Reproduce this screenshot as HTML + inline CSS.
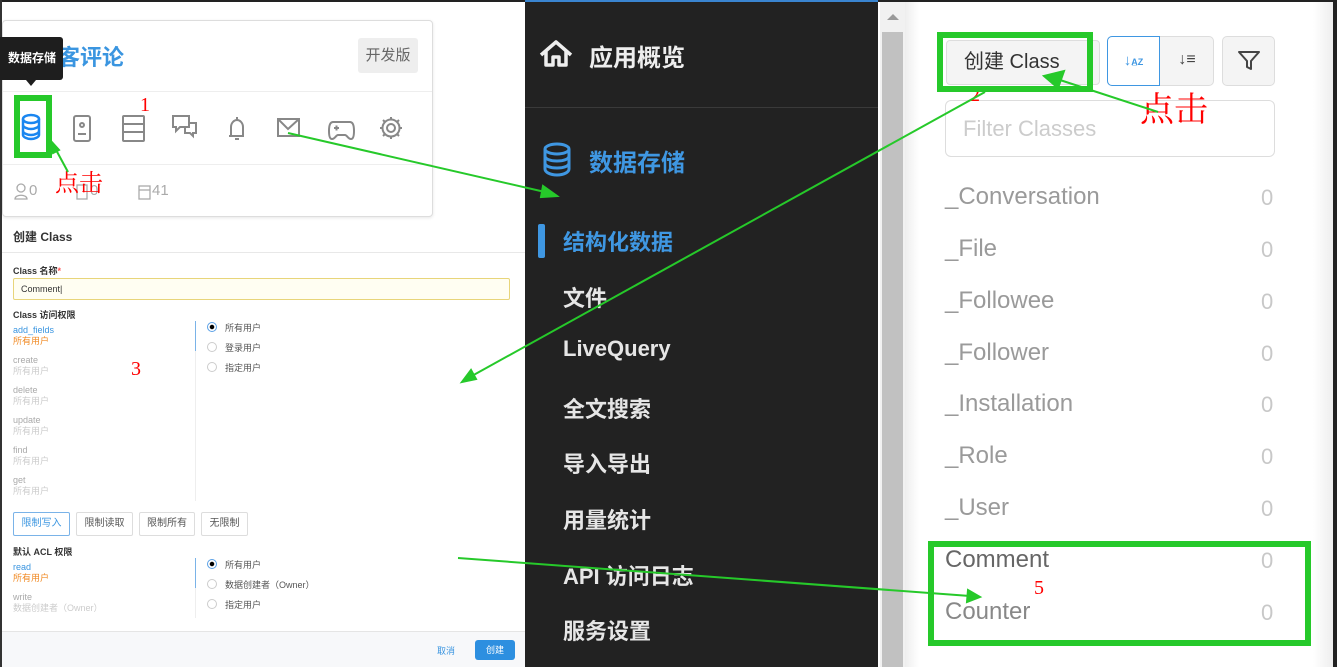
<!DOCTYPE html>
<html><head><meta charset="utf-8"><style>
*{margin:0;padding:0;box-sizing:border-box}
body{width:1337px;height:667px;position:relative;overflow:hidden;background:#fff;font-family:"Liberation Sans","Noto Sans CJK SC",sans-serif}
.a{position:absolute}
.side{color:#e6e6e6;font-size:22px;font-weight:bold;left:563px}
.cls{left:945px;font-size:24px;color:#9a9a9a}
.cnt{left:1261px;font-size:22px;color:#c8c8c8}
.perm{left:13px;font-size:9px;line-height:11px;color:#aaa}
.perm b{font-weight:normal;display:block;color:#ccc}
.rad{width:10px;height:10px;border:1px solid #ccc;border-radius:50%;background:#fff}
.rl{font-size:9px;color:#555}
.btn{height:24px;border:1px solid #ddd;border-radius:2px;font-size:10px;color:#555;text-align:center;line-height:22px}
</style></head><body>
<div class="a" style="left:0;top:0;width:1337px;height:2px;background:#222"></div>
<div class="a" style="left:0;top:0;width:2px;height:667px;background:#333"></div>

<div class="a" style="left:2px;top:20px;width:431px;height:197px;border:1px solid #ddd;border-radius:4px;box-shadow:0 1px 3px rgba(0,0,0,.1);background:#fff"></div>
<div class="a" style="left:3px;top:91px;width:429px;height:1px;background:#eee"></div>
<div class="a" style="left:3px;top:164px;width:429px;height:1px;background:#eee"></div>
<div class="a" style="left:36px;top:40px;font-size:22px;font-weight:bold;color:#3a95e0">博客评论</div>
<div class="a" style="left:358px;top:38px;width:60px;height:35px;background:#eee;border-radius:3px;font-size:15px;color:#666;text-align:center;line-height:35px">开发版</div>
<div class="a" style="left:0;top:37px;width:63px;height:43px;background:#1e1e1e;border-radius:0 3px 3px 0;color:#fff;font-size:12px;font-weight:bold;line-height:43px;padding-left:8px">数据存储</div>
<div class="a" style="left:26px;top:80px;width:0;height:0;border-left:5px solid transparent;border-right:5px solid transparent;border-top:6px solid #1e1e1e"></div>
<svg class="a" style="left:0;top:100px" width="430" height="60" fill="none" stroke="#888" stroke-width="2">
<g stroke="#1a86f0" stroke-width="2.5"><ellipse cx="31" cy="19" rx="8" ry="4"/><path d="M23 19v16c0 2 4 4 8 4s8-2 8-4V19M23 25c0 2 4 4 8 4s8-2 8-4M23 31c0 2 4 4 8 4s8-2 8-4"/></g>
<rect x="74" y="16" width="16" height="25" rx="2"/><circle cx="82" cy="25" r="2"/><path d="M78 34h8"/>
<rect x="123" y="16" width="21" height="25" rx="1"/><path d="M123 24h21M123 32h21"/>
<path d="M173 16h16v11h-9l-4 4v-4h-3zM185 27v6h5l3 3v-3h3v-10h-7"/>
<path d="M229 36h15M231 36v-9c0-4 3-7 6-7s6 3 6 7v9M237 17v3M235 39h4"/>
<rect x="278" y="19" width="21" height="17"/><path d="M278 19l10 10 11-10"/>
<path d="M333 22h17c3 0 4 4 4 9s-1 8-3 8c-3 0-4-4-6-4h-7c-2 0-3 4-6 4-2 0-3-3-3-8s1-9 4-9zM334 28h5M336.5 25.5v5"/>
<circle cx="391" cy="28" r="4"/><path d="M391 17v3M391 36v3M380 28h3M399 28h3M383 20l2 2M397 34l2 2M383 36l2-2M397 22l2-2"/><circle cx="391" cy="28" r="8.5"/>
</svg>
<svg class="a" style="left:14px;top:182px" width="160" height="20" fill="none" stroke="#aaa" stroke-width="1.3"><circle cx="7" cy="6" r="4"/><path d="M1 17c0-5 12-5 12 0z"/><rect x="63" y="3" width="10" height="14"/><rect x="125" y="4" width="11" height="13"/><path d="M125 8h11"/></svg>
<div class="a" style="left:29px;top:182px;font-size:15px;color:#aaa">0</div>
<div class="a" style="left:90px;top:182px;font-size:15px;color:#aaa">0</div>
<div class="a" style="left:152px;top:182px;font-size:15px;color:#aaa">41</div>
<div class="a" style="left:55px;top:163px;font-size:24px;color:#f00;font-family:'Noto Serif CJK SC',serif">点击</div>
<div class="a" style="left:140px;top:94px;font-size:20px;color:#f00;font-family:'Liberation Serif',serif">1</div>

<div class="a" style="left:13px;top:228px;font-size:12px;font-weight:bold;color:#333">创建 Class</div>
<div class="a" style="left:2px;top:252px;width:523px;height:1px;background:#e8e8e8"></div>
<div class="a" style="left:13px;top:264px;font-size:9px;color:#333;font-weight:bold">Class 名称<span style="color:#f55">*</span></div>
<div class="a" style="left:13px;top:278px;width:497px;height:22px;border:1px solid #e8d57a;background:#fffef2;border-radius:2px;font-size:9px;line-height:20px;padding-left:7px;color:#333">Comment|</div>
<div class="a" style="left:13px;top:308px;font-size:9px;color:#333;font-weight:bold">Class 访问权限</div>
<div class="a perm" style="top:325px;color:#3a95e0">add_fields<b style="color:#f08a24">所有用户</b></div>
<div class="a perm" style="top:355px">create<b>所有用户</b></div>
<div class="a perm" style="top:385px">delete<b>所有用户</b></div>
<div class="a perm" style="top:415px">update<b>所有用户</b></div>
<div class="a perm" style="top:445px">find<b>所有用户</b></div>
<div class="a perm" style="top:475px">get<b>所有用户</b></div>
<div class="a" style="left:195px;top:321px;width:1px;height:30px;background:#7ab3e8"></div>
<div class="a" style="left:195px;top:351px;width:1px;height:150px;background:#eee"></div>
<div class="a rad" style="left:207px;top:322px;border-color:#5aa0e6;background:radial-gradient(#000 2px,#fff 2.5px)"></div><div class="a rl" style="left:225px;top:321px">所有用户</div>
<div class="a rad" style="left:207px;top:342px"></div><div class="a rl" style="left:225px;top:341px">登录用户</div>
<div class="a rad" style="left:207px;top:362px"></div><div class="a rl" style="left:225px;top:361px">指定用户</div>
<div class="a" style="left:131px;top:358px;font-size:20px;color:#f00;font-family:'Liberation Serif',serif">3</div>
<div class="a btn" style="left:13px;top:512px;width:57px;border-color:#7ab3e8;color:#3a95e0">限制写入</div>
<div class="a btn" style="left:76px;top:512px;width:57px">限制读取</div>
<div class="a btn" style="left:139px;top:512px;width:56px">限制所有</div>
<div class="a btn" style="left:201px;top:512px;width:47px">无限制</div>
<div class="a" style="left:13px;top:545px;font-size:9px;color:#333;font-weight:bold">默认 ACL 权限</div>
<div class="a perm" style="top:562px;color:#3a95e0">read<b style="color:#f08a24">所有用户</b></div>
<div class="a perm" style="top:592px">write<b>数据创建者（Owner）</b></div>
<div class="a" style="left:195px;top:558px;width:1px;height:30px;background:#7ab3e8"></div>
<div class="a" style="left:195px;top:588px;width:1px;height:30px;background:#eee"></div>
<div class="a rad" style="left:207px;top:559px;border-color:#5aa0e6;background:radial-gradient(#000 2px,#fff 2.5px)"></div><div class="a rl" style="left:225px;top:558px">所有用户</div>
<div class="a rad" style="left:207px;top:579px"></div><div class="a rl" style="left:225px;top:578px">数据创建者（Owner）</div>
<div class="a rad" style="left:207px;top:599px"></div><div class="a rl" style="left:225px;top:598px">指定用户</div>
<div class="a" style="left:2px;top:631px;width:523px;height:36px;background:#f7f8fa;border-top:1px solid #e5e5e5"></div>
<div class="a" style="left:437px;top:644px;font-size:9px;color:#3a95e0">取消</div>
<div class="a" style="left:475px;top:640px;width:40px;height:20px;background:#2d8fe0;border-radius:3px;color:#fff;font-size:9px;text-align:center;line-height:20px">创建</div>

<div class="a" style="left:525px;top:0;width:353px;height:667px;background:#222"></div>
<div class="a" style="left:525px;top:0;width:353px;height:2px;background:#3a85d0"></div>
<div class="a" style="left:525px;top:107px;width:353px;height:1px;background:#3a3a3a"></div>
<svg class="a" style="left:538px;top:38px" width="40" height="32" fill="none" stroke="#eee" stroke-width="3.5" stroke-linejoin="round"><path d="M3 17L18 4l15 13M8 13v14h7v-8h6v8h7V13"/></svg>
<div class="a side" style="left:589px;top:38px;font-size:24px;color:#eee">应用概览</div>
<svg class="a" style="left:541px;top:142px" width="34" height="36" fill="none" stroke="#3f97e2" stroke-width="3"><ellipse cx="16" cy="7" rx="12" ry="5"/><path d="M4 7v20c0 3 5 6 12 6s12-3 12-6V7M4 14c0 3 5 5 12 5s12-2 12-5M4 21c0 3 5 5 12 5s12-2 12-5"/></svg>
<div class="a side" style="left:589px;top:143px;font-size:24px;color:#3f97e2">数据存储</div>
<div class="a" style="left:538px;top:224px;width:7px;height:34px;background:#3f97e2;border-radius:2px"></div>
<div class="a side" style="top:225px;color:#3f97e2">结构化数据</div>
<div class="a side" style="top:281px">文件</div>
<div class="a side" style="top:336px">LiveQuery</div>
<div class="a side" style="top:392px">全文搜索</div>
<div class="a side" style="top:447px">导入导出</div>
<div class="a side" style="top:503px">用量统计</div>
<div class="a side" style="top:559px">API 访问日志</div>
<div class="a side" style="top:614px">服务设置</div>

<div class="a" style="left:878px;top:2px;width:27px;height:665px;background:#f1f1f1;border-left:2px solid #fff"></div>
<div class="a" style="left:882px;top:32px;width:21px;height:635px;background:#c1c1c1"></div>
<div class="a" style="left:887px;top:14px;width:0;height:0;border-left:6px solid transparent;border-right:6px solid transparent;border-bottom:6px solid #999"></div>
<div class="a" style="left:905px;top:2px;width:14px;height:665px;background:linear-gradient(90deg,#eee,#fff)"></div>
<div class="a" style="left:1313px;top:2px;width:20px;height:665px;background:linear-gradient(90deg,#fff,#eee)"></div>
<div class="a" style="left:1333px;top:0;width:4px;height:667px;background:#222"></div>

<div class="a" style="left:946px;top:40px;width:154px;height:45px;background:#f4f4f4;border:1px solid #ddd;border-radius:4px;font-size:20px;color:#333;line-height:43px;padding-left:17px">创建 Class</div>
<div class="a" style="left:1107px;top:36px;width:107px;height:50px;border:1px solid #ddd;border-radius:5px;background:#f4f4f4"></div>
<div class="a" style="left:1107px;top:36px;width:53px;height:50px;border:1px solid #3f97e2;border-radius:5px 0 0 5px;background:#fff;color:#3f97e2;font-size:15px;font-weight:bold;text-align:center;line-height:48px">↓<span style="font-size:9px">A̲Z</span></div>
<div class="a" style="left:1160px;top:36px;width:54px;height:50px;color:#444;font-size:16px;text-align:center;line-height:48px">↓≡</div>
<div class="a" style="left:1222px;top:36px;width:53px;height:50px;border:1px solid #ddd;border-radius:5px;background:#f4f4f4"></div>
<svg class="a" style="left:1237px;top:49px" width="24" height="24" fill="none" stroke="#444" stroke-width="2" stroke-linejoin="round"><path d="M2 3h20l-8 9v8l-4-2v-6z"/></svg>
<div class="a" style="left:945px;top:100px;width:330px;height:57px;border:1px solid #ddd;border-radius:6px;font-size:22px;color:#ccc;line-height:55px;padding-left:17px">Filter Classes</div>
<div class="a cls" style="top:183px">_Conversation</div><div class="a cnt" style="top:185px">0</div>
<div class="a cls" style="top:235px">_File</div><div class="a cnt" style="top:237px">0</div>
<div class="a cls" style="top:287px">_Followee</div><div class="a cnt" style="top:289px">0</div>
<div class="a cls" style="top:339px">_Follower</div><div class="a cnt" style="top:341px">0</div>
<div class="a cls" style="top:390px">_Installation</div><div class="a cnt" style="top:392px">0</div>
<div class="a cls" style="top:442px">_Role</div><div class="a cnt" style="top:444px">0</div>
<div class="a cls" style="top:494px">_User</div><div class="a cnt" style="top:496px">0</div>
<div class="a cls" style="top:546px;color:#666">Comment</div><div class="a cnt" style="top:548px">0</div>
<div class="a cls" style="top:598px;color:#888">Counter</div><div class="a cnt" style="top:600px">0</div>

<div class="a" style="left:1140px;top:82px;font-size:34px;color:#f00;font-family:'Noto Serif CJK SC',serif">点击</div>
<div class="a" style="left:970px;top:84px;font-size:20px;color:#f00;font-family:'Liberation Serif',serif">2</div>
<div class="a" style="left:1034px;top:577px;font-size:20px;color:#f00;font-family:'Liberation Serif',serif">5</div>
<svg class="a" style="left:0;top:0" width="1337" height="667">
<g fill="none" stroke="#26c92a" stroke-width="6"><rect x="17" y="98" width="32" height="57"/><rect x="940" y="35" width="150" height="54"/><rect x="931" y="544" width="377" height="99"/></g>
<g stroke="#26c92a" stroke-width="2" fill="#26c92a">
<line x1="68" y1="172" x2="55" y2="148"/><polygon points="50,140 59,150 53,153"/>
<line x1="288" y1="133" x2="545" y2="192"/><polygon points="557,196 543,186 541,197"/>
<line x1="985" y1="92" x2="470" y2="377"/><polygon points="462,382 471,370 476,379"/>
<line x1="1158" y1="112" x2="1060" y2="80"/><polygon points="1044,76 1064,71 1058,88"/>
<line x1="458" y1="558" x2="970" y2="596"/><polygon points="980,597 968,590 967,602"/>
</g></svg>
</body></html>
